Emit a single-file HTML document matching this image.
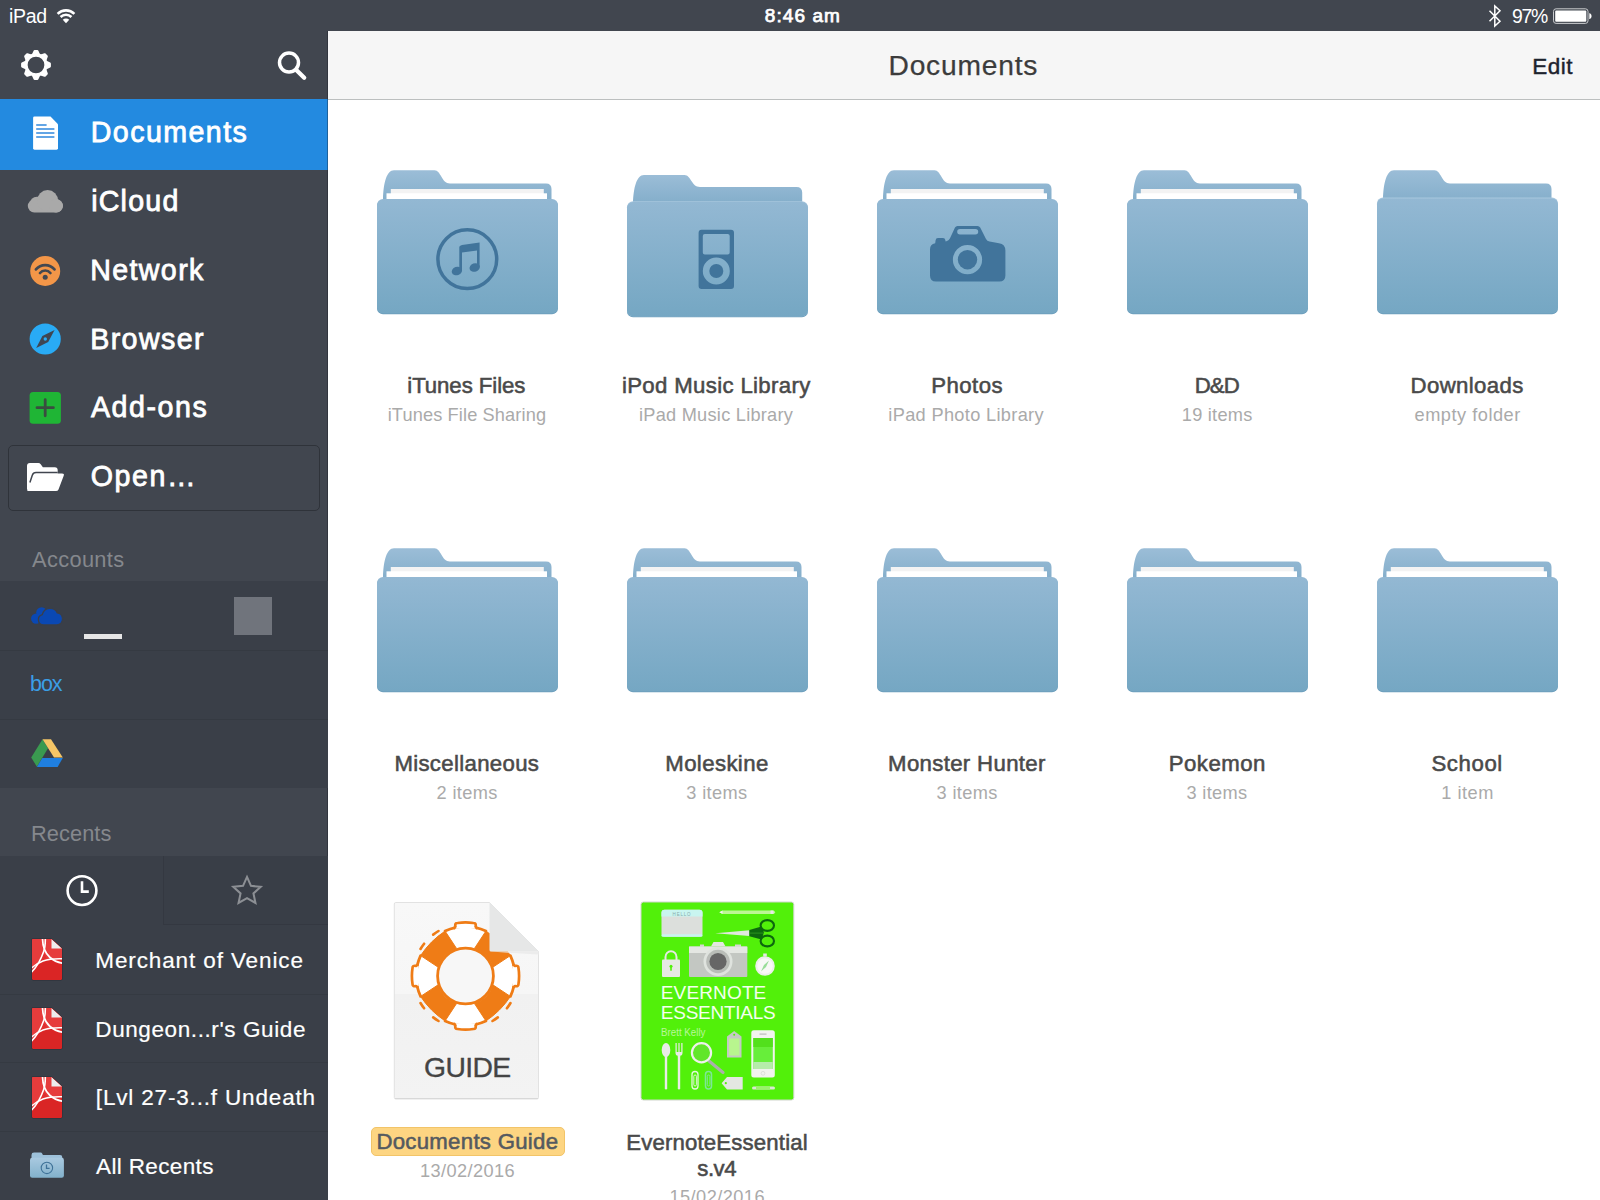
<!DOCTYPE html>
<html lang="en">
<head>
<meta charset="utf-8">
<title>Documents</title>
<style>
*{box-sizing:border-box;margin:0;padding:0}
html,body{width:1600px;height:1200px;overflow:hidden;background:#fff}
body{font-family:"Liberation Sans",sans-serif;position:relative;color:#444}
.abs{position:absolute}
.t{position:absolute;white-space:nowrap;line-height:1}
#status{left:0;top:0;width:1600px;height:31px;background:#41464f}
#side{left:0;top:31px;width:328px;height:1169px;background:#41464f}
#head{left:328px;top:31px;width:1272px;height:69px;background:#f6f6f6;border-bottom:1px solid #bcbfbf}
#sel{left:0;top:99px;width:328px;height:70.500px;background:#238ae0}
#openbox{left:8px;top:445px;width:312px;height:66px;border:1px solid #2f333a;border-radius:5px}
#acc{left:0;top:581px;width:328px;height:206.500px;background:#3a3f48}
#rec{left:0;top:856px;width:328px;height:344px;background:#3a3f48}
.sep{position:absolute;left:0;width:328px;height:1px;background:#353a42}
</style>
</head>
<body>
<svg width="0" height="0" style="position:absolute">
<defs>
<linearGradient id="gf" x1="0" y1="0" x2="0" y2="1"><stop offset="0" stop-color="#93b8d3"/><stop offset="1" stop-color="#75a7c3"/></linearGradient>
<linearGradient id="gb" x1="0" y1="0" x2="0" y2="1"><stop offset="0" stop-color="#9bbdd7"/><stop offset="1" stop-color="#7fabc8"/></linearGradient>
<symbol id="folder" viewBox="0 0 184 150">
  <path d="M8 40 L8 30 C8.500 14 11.500 1.200 19 1.200 L59.500 1.200 C66 1.200 66.500 14.400 75 14.400 L171 14.400 Q176.500 14.400 176.500 20 L176.500 40 Z" fill="url(#gb)"/>
  <rect x="15.800" y="20" width="153" height="12" fill="#f3f3f3"/>
  <rect x="11.500" y="24.300" width="160.500" height="10" fill="#fff"/>
  <rect x="2" y="31" width="181" height="114.300" rx="6" fill="#6d9fbd"/>
  <rect x="2" y="30" width="181" height="114.300" rx="6" fill="url(#gf)"/>
</symbol>
<symbol id="folderE" viewBox="0 0 184 150">
  <path d="M8 40 L8 34 C8.500 19 11.500 5.900 19 5.900 L59.500 5.900 C66 5.900 66.500 17.900 75 17.900 L171.500 17.900 Q177.200 17.900 177.200 23.500 L177.200 40 Z" fill="url(#gb)"/>
  <rect x="2" y="33.900" width="181" height="114.300" rx="6" fill="#6d9fbd"/>
  <rect x="2" y="32.200" width="181" height="115" rx="6" fill="#a8c7de"/>
  <rect x="2" y="33" width="181" height="114.300" rx="6" fill="url(#gf)"/>
</symbol>
<symbol id="folderD" viewBox="0 0 184 150">
  <path d="M8 40 L8 30 C8.500 14 11.500 1.200 19 1.200 L59.500 1.200 C66 1.200 66.500 14.400 75 14.400 L171 14.400 Q176.500 14.400 176.500 20 L176.500 40 Z" fill="url(#gb)"/>
  <rect x="2" y="31" width="181" height="114.300" rx="6" fill="#6d9fbd"/>
  <rect x="2" y="28.600" width="181" height="115" rx="6" fill="#a8c7de"/>
  <rect x="2" y="29.400" width="181" height="114.900" rx="6" fill="url(#gf)"/>
</symbol>
</defs>
</svg>
<div id="status" class="abs"></div>
<div id="side" class="abs"></div>
<div id="head" class="abs"></div>
<div id="sel" class="abs"></div>
<div id="edge" class="abs" style="left:327px;top:31px;width:1px;height:1169px;background:rgba(20,24,32,.35)"></div>
<div id="openbox" class="abs"></div>
<div id="acc" class="abs"></div>
<div class="sep" style="top:650px"></div>
<div class="sep" style="top:719px"></div>
<div class="abs" style="left:84px;top:634px;width:38px;height:5px;background:#e6e6e6"></div>
<div class="abs" style="left:234px;top:597px;width:38px;height:38px;background:#70747c"></div>
<div id="rec" class="abs"></div>
<div class="abs" style="left:163px;top:856px;width:165px;height:69px;border-left:1px solid #343841;border-bottom:1px solid #343841;background:#393e47"></div>
<div class="sep" style="top:994px"></div>
<div class="sep" style="top:1062px"></div>
<div class="sep" style="top:1131px"></div>
<div class="abs" style="left:370.500px;top:1126.500px;width:194.500px;height:29px;background:#fdd582;border:1px solid #f2c468;border-radius:5px"></div>
<div class="t" style="left:9.00px;top:7.00px;font-size:19.5px;color:#fff;letter-spacing:-0.311px">iPad</div>
<div class="t" style="left:764.77px;top:6.00px;font-size:19px;color:#fff;letter-spacing:1.071px;-webkit-text-stroke:0.75px #fff">8:46 am</div>
<div class="t" style="left:1512.00px;top:7.00px;font-size:19.4px;color:#fff;letter-spacing:-1.284px">97%</div>
<div class="t" style="left:888.52px;top:51.00px;font-size:28.2px;color:#3c3c3c;letter-spacing:0.785px;-webkit-text-stroke:0.25px #3c3c3c">Documents</div>
<div class="t" style="left:1532.20px;top:56.00px;font-size:22.5px;color:#1d232e;letter-spacing:0.527px;-webkit-text-stroke:0.4px #1d232e">Edit</div>
<div class="t" style="left:90.70px;top:118.00px;font-size:28.6px;color:#fff;letter-spacing:1.448px;-webkit-text-stroke:0.8px #fff">Documents</div>
<div class="t" style="left:91.15px;top:187.00px;font-size:28.6px;color:#fff;letter-spacing:1.218px;-webkit-text-stroke:0.8px #fff">iCloud</div>
<div class="t" style="left:90.15px;top:256.00px;font-size:28.6px;color:#fff;letter-spacing:1.397px;-webkit-text-stroke:0.8px #fff">Network</div>
<div class="t" style="left:90.15px;top:325.00px;font-size:28.6px;color:#fff;letter-spacing:1.434px;-webkit-text-stroke:0.8px #fff">Browser</div>
<div class="t" style="left:90.90px;top:393.00px;font-size:28.6px;color:#fff;letter-spacing:1.583px;-webkit-text-stroke:0.8px #fff">Add-ons</div>
<div class="t" style="left:90.65px;top:462.00px;font-size:28.6px;color:#fff;letter-spacing:1.625px;-webkit-text-stroke:0.8px #fff">Open…</div>
<div class="t" style="left:32.00px;top:549.00px;font-size:21.8px;color:#85888d;letter-spacing:0.356px">Accounts</div>
<div class="t" style="left:31.00px;top:823.00px;font-size:21.8px;color:#85888d;letter-spacing:0.073px">Recents</div>
<div class="t" style="left:95.30px;top:950.00px;font-size:22.5px;color:#fff;letter-spacing:0.882px;-webkit-text-stroke:0.2px #fff">Merchant of Venice</div>
<div class="t" style="left:95.30px;top:1019.00px;font-size:22.5px;color:#fff;letter-spacing:0.594px;-webkit-text-stroke:0.2px #fff">Dungeon...r's Guide</div>
<div class="t" style="left:95.80px;top:1087.00px;font-size:22.5px;color:#fff;letter-spacing:0.835px;-webkit-text-stroke:0.2px #fff">[Lvl 27-3...f Undeath</div>
<div class="t" style="left:96.10px;top:1156.00px;font-size:22.5px;color:#fff;letter-spacing:0.355px;-webkit-text-stroke:0.2px #fff">All Recents</div>
<div class="t" style="left:30.00px;top:674.00px;font-size:21.5px;color:#3a9ee6;letter-spacing:-1.057px">box</div>
<div class="t" style="left:407.27px;top:375.00px;font-size:22.2px;color:#4a4a4a;letter-spacing:-0.058px;-webkit-text-stroke:0.55px #4a4a4a">iTunes Files</div>
<div class="t" style="left:621.88px;top:375.00px;font-size:22.2px;color:#4a4a4a;letter-spacing:0.350px;-webkit-text-stroke:0.55px #4a4a4a">iPod Music Library</div>
<div class="t" style="left:931.27px;top:375.00px;font-size:22.2px;color:#4a4a4a;letter-spacing:0.434px;-webkit-text-stroke:0.55px #4a4a4a">Photos</div>
<div class="t" style="left:1194.78px;top:375.00px;font-size:22.2px;color:#4a4a4a;letter-spacing:-0.936px;-webkit-text-stroke:0.55px #4a4a4a">D&amp;D</div>
<div class="t" style="left:1410.58px;top:375.00px;font-size:22.2px;color:#4a4a4a;letter-spacing:0.360px;-webkit-text-stroke:0.55px #4a4a4a">Downloads</div>
<div class="t" style="left:394.38px;top:753.00px;font-size:22.2px;color:#4a4a4a;letter-spacing:0.330px;-webkit-text-stroke:0.55px #4a4a4a">Miscellaneous</div>
<div class="t" style="left:665.27px;top:753.00px;font-size:22.2px;color:#4a4a4a;letter-spacing:0.388px;-webkit-text-stroke:0.55px #4a4a4a">Moleskine</div>
<div class="t" style="left:888.07px;top:753.00px;font-size:22.2px;color:#4a4a4a;letter-spacing:0.341px;-webkit-text-stroke:0.55px #4a4a4a">Monster Hunter</div>
<div class="t" style="left:1168.68px;top:753.00px;font-size:22.2px;color:#4a4a4a;letter-spacing:0.509px;-webkit-text-stroke:0.55px #4a4a4a">Pokemon</div>
<div class="t" style="left:1431.48px;top:753.00px;font-size:22.2px;color:#4a4a4a;letter-spacing:0.588px;-webkit-text-stroke:0.55px #4a4a4a">School</div>
<div class="t" style="left:376.38px;top:1131.00px;font-size:22.2px;color:#555a60;letter-spacing:0.293px;-webkit-text-stroke:0.55px #555a60">Documents Guide</div>
<div class="t" style="left:626.27px;top:1132.00px;font-size:22.2px;color:#4a4a4a;letter-spacing:0.159px;-webkit-text-stroke:0.55px #4a4a4a">EvernoteEssential</div>
<div class="t" style="left:697.27px;top:1158.00px;font-size:22.2px;color:#4a4a4a;letter-spacing:-0.467px;-webkit-text-stroke:0.55px #4a4a4a">s.v4</div>
<div class="t" style="left:387.70px;top:406.00px;font-size:18.2px;color:#aaaaaa;letter-spacing:0.133px">iTunes File Sharing</div>
<div class="t" style="left:639.00px;top:406.00px;font-size:18.2px;color:#aaaaaa;letter-spacing:0.253px">iPad Music Library</div>
<div class="t" style="left:888.30px;top:406.00px;font-size:18.2px;color:#aaaaaa;letter-spacing:0.333px">iPad Photo Library</div>
<div class="t" style="left:1181.80px;top:406.00px;font-size:18.2px;color:#aaaaaa;letter-spacing:0.251px">19 items</div>
<div class="t" style="left:1414.50px;top:406.00px;font-size:18.2px;color:#aaaaaa;letter-spacing:0.516px">empty folder</div>
<div class="t" style="left:436.50px;top:784.00px;font-size:18.2px;color:#aaaaaa;letter-spacing:0.379px">2 items</div>
<div class="t" style="left:686.30px;top:784.00px;font-size:18.2px;color:#aaaaaa;letter-spacing:0.362px">3 items</div>
<div class="t" style="left:936.50px;top:784.00px;font-size:18.2px;color:#aaaaaa;letter-spacing:0.362px">3 items</div>
<div class="t" style="left:1186.60px;top:784.00px;font-size:18.2px;color:#aaaaaa;letter-spacing:0.295px">3 items</div>
<div class="t" style="left:1441.20px;top:784.00px;font-size:18.2px;color:#aaaaaa;letter-spacing:0.525px">1 item</div>
<div class="t" style="left:419.90px;top:1162.00px;font-size:18.2px;color:#aaaaaa;letter-spacing:0.410px">13/02/2016</div>
<div class="t" style="left:669.50px;top:1188.00px;font-size:18.2px;color:#aaaaaa;letter-spacing:0.443px">15/02/2016</div>
<!-- GRID FOLDERS -->
<svg class="abs" style="left:375px;top:169px" width="184" height="150"><use href="#folder"/></svg>
<svg class="abs" style="left:625px;top:169px" width="184" height="150"><use href="#folderE"/></svg>
<svg class="abs" style="left:875px;top:169px" width="184" height="150"><use href="#folder"/></svg>
<svg class="abs" style="left:1125px;top:169px" width="184" height="150"><use href="#folder"/></svg>
<svg class="abs" style="left:1375px;top:169px" width="184" height="150"><use href="#folderD"/></svg>
<svg class="abs" style="left:375px;top:547px" width="184" height="150"><use href="#folder"/></svg>
<svg class="abs" style="left:625px;top:547px" width="184" height="150"><use href="#folder"/></svg>
<svg class="abs" style="left:875px;top:547px" width="184" height="150"><use href="#folder"/></svg>
<svg class="abs" style="left:1125px;top:547px" width="184" height="150"><use href="#folder"/></svg>
<svg class="abs" style="left:1375px;top:547px" width="184" height="150"><use href="#folder"/></svg>
<!-- STATUS ICONS -->
<svg class="abs" style="left:50px;top:0" width="40" height="31" viewBox="50 0 40 31">
  <g transform="translate(66 23) scale(.955) translate(-66 -23)">
  <g fill="none" stroke="#fff" stroke-width="2.700">
    <path d="M57.200 13.400 A12.600 12.600 0 0 1 74.800 13.400"/>
    <path d="M60.300 16.700 A8.100 8.100 0 0 1 71.700 16.700"/>
  </g>
  <path d="M66 23.200 L62.600 19.600 A4.800 4.800 0 0 1 69.400 19.600 Z" fill="#fff"/>
  </g>
</svg>
<svg class="abs" style="left:1480px;top:0" width="120" height="31" viewBox="1480 0 120 31">
  <path d="M1489.500 10.700 L1500 21.200 L1494.800 26 L1494.800 6 L1500 10.800 L1489.500 21.300" fill="none" stroke="#fff" stroke-width="1.500" stroke-linejoin="miter"/>
  <rect x="1553.500" y="8.800" width="34.500" height="14.600" rx="2.600" fill="none" stroke="#c9cbce" stroke-width="1"/>
  <rect x="1555.200" y="10.500" width="31.100" height="11.200" rx="1" fill="#fff"/>
  <path d="M1589.300 13.300 L1590 13.300 Q1591.600 14.200 1591.600 16.100 Q1591.600 18 1590 18.900 L1589.300 18.900 Z" fill="#fff"/>
</svg>

<!-- TOOLBAR ICONS -->
<svg class="abs" style="left:15.800px;top:45.300px" width="40" height="40" viewBox="-20.800 -20.800 41.600 41.600">
  <g fill="#fff">
    <path fill-rule="evenodd" d="M0 -12.100 A12.100 12.100 0 1 1 0 12.100 A12.100 12.100 0 1 1 0 -12.100 Z M0 -8.700 A8.700 8.700 0 1 0 0 8.700 A8.700 8.700 0 1 0 0 -8.700 Z"/>
    <g id="tooth"><path d="M-4.300 -11 L-2.500 -14.800 Q-2.200 -15.500 -1.400 -15.500 L1.400 -15.500 Q2.200 -15.500 2.500 -14.800 L4.300 -11 Z"/></g>
    <use href="#tooth" transform="rotate(45)"/><use href="#tooth" transform="rotate(90)"/><use href="#tooth" transform="rotate(135)"/>
    <use href="#tooth" transform="rotate(180)"/><use href="#tooth" transform="rotate(225)"/><use href="#tooth" transform="rotate(270)"/><use href="#tooth" transform="rotate(315)"/>
  </g>
</svg>
<svg class="abs" style="left:270px;top:45px" width="45" height="45" viewBox="270 45 45 45">
  <circle cx="289" cy="62.600" r="9.500" fill="none" stroke="#fff" stroke-width="3.500"/>
  <path d="M296.300 69.900 L304.200 77.800" stroke="#fff" stroke-width="4.300" stroke-linecap="round"/>
</svg>

<!-- NAV ICONS -->
<svg class="abs" style="left:20px;top:105px" width="60" height="60" viewBox="20 105 60 60">
  <path d="M34.500 116.600 L50.500 116.600 L58 124.300 L58 148.300 Q58 149.700 56.600 149.700 L34.500 149.700 Q33.100 149.700 33.100 148.300 L33.100 118 Q33.100 116.600 34.500 116.600 Z" fill="#fff"/>
  <g stroke="#3088dd" stroke-width="1.600">
    <path d="M36.200 125h10.400M36.200 129h18.200M36.200 133h18.200M36.200 137h18.200"/>
  </g>
</svg>
<svg class="abs" style="left:20px;top:180px" width="60" height="45" viewBox="20 180 60 45">
  <g fill="#a9a9a9">
    <rect x="27.800" y="199.500" width="35.200" height="13" rx="6.500"/>
    <circle cx="37" cy="204" r="7.300"/>
    <circle cx="47.600" cy="200.600" r="10.500"/>
    <circle cx="56" cy="205.800" r="6.800"/>
  </g>
</svg>
<svg class="abs" style="left:25px;top:250px" width="40" height="40" viewBox="25 250 40 40">
  <circle cx="45.200" cy="271" r="15" fill="#f39648"/>
  <circle cx="45.200" cy="277.300" r="2.500" fill="#434851"/>
  <g fill="none" stroke="#434851" stroke-width="2.700" stroke-linecap="round">
    <path d="M40 273 A6.700 6.700 0 0 1 50.400 273"/>
    <path d="M35.900 269.400 A12.200 12.200 0 0 1 54.500 269.400"/>
  </g>
</svg>
<svg class="abs" style="left:25px;top:320px" width="40" height="40" viewBox="25 320 40 40">
  <circle cx="45.200" cy="339" r="15.600" fill="#29abf5"/>
  <path d="M54.600 330.100 L48.200 342 L36.200 348 L42.400 336.100 Z" fill="#3f4652"/>
  <circle cx="45.300" cy="339" r="1.700" fill="#29abf5"/>
</svg>
<svg class="abs" style="left:25px;top:388px" width="40" height="40" viewBox="25 388 40 40">
  <rect x="29.600" y="392" width="31.300" height="31.800" rx="3.500" fill="#1fb535"/>
  <path d="M45.200 399.600v16.200M37 407.700h16.400" stroke="#3a4d40" stroke-width="2.800" stroke-linecap="round"/>
</svg>
<svg class="abs" style="left:20px;top:455px" width="55" height="45" viewBox="20 455 55 45">
  <path d="M27 489 L27 465.800 Q27 462.900 29.900 462.900 L38.300 462.900 Q39.800 462.900 40.700 464.200 L42.900 467.300 L54.800 467.300 Q57.700 467.300 57.700 470.200 L57.700 489 Z" fill="#fff"/>
  <path d="M34.600 473.400 L62 473.400 Q64.600 473.400 63.700 475.800 L58.500 489.400 Q57.800 491 56 491 L28.700 491 Q26.600 491 27.300 489 L32 475.300 Q32.700 473.400 34.600 473.400 Z" fill="#fff"/>
  <path d="M29.900 482.500 L32.300 475.300 Q33.200 472.500 36 472.500 L57.700 472.500" fill="none" stroke="#41464f" stroke-width="1.500"/>
</svg>
<!-- ACCOUNT LOGOS -->
<svg class="abs" style="left:25px;top:600px" width="45" height="30" viewBox="25 600 45 30">
  <g fill="#0a48b3">
    <circle cx="36.200" cy="618.600" r="5.200"/>
    <circle cx="41.600" cy="612.600" r="5.400"/>
    <rect x="36" y="614" width="10" height="9"/>
  </g>
  <g fill="#0a48b3" stroke="#3a3f48" stroke-width="1.300">
    <path d="M43.500 625 A5.300 5.300 0 0 1 42.300 614.600 A8 8 0 0 1 57.300 612.900 A6.100 6.100 0 0 1 57 625 Z"/>
  </g>
</svg>
<svg class="abs" style="left:25px;top:735px" width="45" height="36" viewBox="25 735 45 36">
  <path d="M42.500 739.200 L31.200 757.400 L36.900 766.800 L48 748.200 Z" fill="#3a9a50"/>
  <path d="M42.500 739.200 L51 739.200 L62.800 757.600 L54 757.600 Z" fill="#f6c666"/>
  <path d="M42.300 757.900 L62.800 757.900 L57.600 767 L36.900 767 Z" fill="#1f7fe0"/>
</svg>

<!-- RECENTS TABS -->
<svg class="abs" style="left:60px;top:870px" width="44" height="42" viewBox="60 870 44 42">
  <circle cx="82" cy="890.600" r="14.400" fill="none" stroke="#fff" stroke-width="2.600"/>
  <path d="M82 881.300 L82 891.600 L88.800 891.600" fill="none" stroke="#fff" stroke-width="2.600" stroke-linejoin="miter"/>
</svg>
<svg class="abs" style="left:225.500px;top:870px" width="42" height="42" viewBox="-22.800 -22.800 45.600 45.600">
  <path d="M0 -15.300 L4.300 -5.600 L14.900 -4.500 L7 2.600 L9.200 13 L0 7.700 L-9.200 13 L-7 2.600 L-14.900 -4.500 L-4.300 -5.600 Z" fill="none" stroke="#8c8f94" stroke-width="2.200" stroke-linejoin="miter"/>
</svg>

<!-- PDF ICONS -->
<svg width="0" height="0" style="position:absolute"><defs>
<linearGradient id="gp" x1="0" y1="0" x2="0" y2="1"><stop offset="0" stop-color="#e84141"/><stop offset=".5" stop-color="#e03333"/><stop offset=".55" stop-color="#da2626"/><stop offset="1" stop-color="#d92323"/></linearGradient>
<symbol id="pdf" viewBox="0 0 32 43">
  <clipPath id="pdfc"><path d="M2 1 L20.500 1 L31 10.600 L31 40.500 Q31 42 29.500 42 L2.500 42 Q1 42 1 40.500 L1 2 Q1 1 2 1 Z"/></clipPath>
  <path d="M1.800 0.500 L20.700 0.500 L31.500 10.400 L31.500 40.700 Q31.500 42.500 29.700 42.500 L2.300 42.500 Q0.500 42.500 0.500 40.700 L0.500 1.800 Q0.500 0.500 1.800 0.500 Z" fill="#2b2f36"/>
  <g clip-path="url(#pdfc)">
    <rect x="0" y="0" width="32" height="43" fill="#da2525"/>
    <path d="M0 0 L32 0 L32 20.800 C25 20.500 18 21 12 23 C8 24.500 4 27 0 30.500 Z" fill="#e63c3c"/>
    <path d="M12.500 14 C10 21 6 29 1 33.800 L1 29.500 C4 27 8 24.500 12 23 C13.500 22.400 15 22 16.500 21.700 Z" fill="#e03030"/>
    <path d="M20.500 1 L31 10.600 L20.500 10.600 Z" fill="#ededed"/>
    <g fill="none" stroke="#fff" stroke-linecap="butt">
      <path d="M11.500 0 C11.500 9 14 15 19 19.500 C23 23 27 24.500 32 25.200" stroke-width="1.700"/>
      <path d="M14.300 0 C14.500 8 13.500 11.500 12.500 14 C10 21 6 29 0 34.500" stroke-width="1.600"/>
      <path d="M0 30.500 C4 27 8 24.500 12 23 C18 21 25 20.500 32 20.800" stroke-width="1.400"/>
    </g>
  </g>
</symbol>
</defs></svg>
<svg class="abs" style="left:31px;top:938px" width="32" height="43"><use href="#pdf"/></svg>
<svg class="abs" style="left:31px;top:1007px" width="32" height="43"><use href="#pdf"/></svg>
<svg class="abs" style="left:31px;top:1076px" width="32" height="43"><use href="#pdf"/></svg>

<!-- ALL RECENTS FOLDER -->
<svg class="abs" style="left:28px;top:1150px" width="38" height="30" viewBox="28 1150 38 30">
  <defs><linearGradient id="gs1" x1="0" y1="0" x2="0" y2="1"><stop offset="0" stop-color="#a9c9e0"/><stop offset="1" stop-color="#82b1cb"/></linearGradient></defs>
  <path d="M31.500 1160 L31.500 1155 Q31.500 1152.600 34 1152.600 L40.500 1152.600 Q41.800 1152.600 42.300 1153.800 L42.900 1155 L60 1155 Q62.300 1155 62.300 1157.300 L62.300 1160 Z" fill="#9dc1da"/>
  <rect x="30" y="1157.800" width="33.900" height="20" rx="2.200" fill="url(#gs1)"/>
  <circle cx="46.900" cy="1167.900" r="5.700" fill="none" stroke="#3f7298" stroke-width="1.100"/>
  <path d="M46.500 1164.600 L46.500 1168.400 L49.600 1168.400" fill="none" stroke="#3f7298" stroke-width="1.300"/>
</svg>

<!-- FOLDER OVERLAY ICONS -->
<svg class="abs" style="left:430px;top:222px" width="76" height="76" viewBox="430 222 76 76">
  <circle cx="467.300" cy="259.200" r="29.400" fill="none" stroke="#41749b" stroke-width="3.500"/>
  <g fill="#41749b">
    <ellipse cx="456.900" cy="271" rx="5.300" ry="4.200" transform="rotate(-20 456.900 271)"/>
    <ellipse cx="474.700" cy="267.500" rx="5.300" ry="4.200" transform="rotate(-20 474.700 267.500)"/>
    <path d="M459.300 246.800 Q460 245.300 462 244.900 L479.600 242.400 L479.600 267 L477 267 L477 250.500 L462 252.600 L462 270.500 L459.300 270.500 Z"/>
  </g>
</svg>
<svg class="abs" style="left:690px;top:222px" width="54" height="76" viewBox="690 222 54 76">
  <path fill-rule="evenodd" fill="#41749b" d="M701.600 229.700 L731 229.700 Q734 229.700 734 232.700 L734 286 Q734 289 731 289 L701.600 289 Q698.600 289 698.600 286 L698.600 232.700 Q698.600 229.700 701.600 229.700 Z M704.800 234 Q702.800 234 702.800 236 L702.800 252.600 Q702.800 254.600 704.800 254.600 L727.700 254.600 Q729.700 254.600 729.700 252.600 L729.700 236 Q729.700 234 727.700 234 Z M716.300 257.500 A13.500 13.500 0 1 0 716.300 284.500 A13.500 13.500 0 1 0 716.300 257.500 Z"/>
  <circle cx="716.300" cy="271" r="7" fill="#41749b"/>
</svg>
<svg class="abs" style="left:920px;top:220px" width="96" height="70" viewBox="920 220 96 70">
  <path fill-rule="evenodd" fill="#41749b" d="M957.500 226 L977.500 226 Q979.300 226 980.200 227.600 L986 239 Q987 241 989.500 241.500 L999 243.200 Q1005.400 244.300 1005.400 250.500 L1005.400 275.500 Q1005.400 281.600 999.300 281.600 L936 281.600 Q930 281.600 930 275.500 L930 249.500 Q930 244.300 935.200 243.300 L935.600 240.300 Q935.800 238 938 238 L943 238 Q945 238 945.300 240 L945.600 241.500 L947 241 Q949 240.300 950 238.300 L955 227.600 Q955.800 226 957.500 226 Z M960 229 Q957.200 229 957.200 231.700 Q957.200 234.400 960 234.400 L975.400 234.400 Q978.200 234.400 978.200 231.700 Q978.200 229 975.400 229 Z M967.500 245.100 A14.600 14.600 0 1 0 967.500 274.300 A14.600 14.600 0 1 0 967.500 245.100 Z"/>
  <circle cx="967.500" cy="259.700" r="9.700" fill="#41749b"/>
</svg>

<!-- GUIDE DOC -->
<svg class="abs" style="left:390px;top:898px" width="154" height="206" viewBox="390 898 154 206">
  <defs><linearGradient id="gd" x1="0" y1="0" x2="0" y2="1"><stop offset="0" stop-color="#f8f8f8"/><stop offset=".467" stop-color="#f6f6f6"/><stop offset=".468" stop-color="#f1f1f1"/><stop offset="1" stop-color="#f3f3f3"/></linearGradient></defs>
  <path d="M395.800 902.500 L489.500 902.500 L538.500 951.500 L538.500 1097.500 Q538.500 1099 537 1099 L395.800 1099 Q394.300 1099 394.300 1097.500 L394.300 904 Q394.300 902.500 395.800 902.500 Z" fill="url(#gd)" stroke="#e2e2e2" stroke-width="1"/>
  <path d="M395 1098.500 L538 1098.500" stroke="#d8d8d8" stroke-width="1.200"/>
  <path d="M445.1 931.1 A49.3 49.3 0 0 1 485.9 931.1 L474.5 948.4 A29.0 29.0 0 0 0 456.5 948.4 Z M510.4 955.6 A49.3 49.3 0 0 1 510.4 996.4 L493.1 985.0 A29.0 29.0 0 0 0 493.1 967.0 Z M485.9 1020.9 A49.3 49.3 0 0 1 445.1 1020.9 L456.5 1003.6 A29.0 29.0 0 0 0 474.5 1003.6 Z M420.6 996.4 A49.3 49.3 0 0 1 420.6 955.6 L437.9 967.0 A29.0 29.0 0 0 0 437.9 985.0 Z" fill="#fff"/>
  <path d="M445.1 931.1 A49.3 49.3 0 0 1 485.9 931.1 M510.4 955.6 A49.3 49.3 0 0 1 510.4 996.4 M485.9 1020.9 A49.3 49.3 0 0 1 445.1 1020.9 M420.6 996.4 A49.3 49.3 0 0 1 420.6 955.6" fill="none" stroke="#ef7c16" stroke-width="2.800" stroke-linecap="round"/>
  <path d="M485.9 931.1 A83.8 83.8 0 0 1 510.4 955.6 L493.1 967.0 A29.0 29.0 0 0 0 474.5 948.4 Z M510.4 996.4 A83.8 83.8 0 0 1 485.9 1020.9 L474.5 1003.6 A29.0 29.0 0 0 0 493.1 985.0 Z M445.1 1020.9 A83.8 83.8 0 0 1 420.6 996.4 L437.9 985.0 A29.0 29.0 0 0 0 456.5 1003.6 Z M420.6 955.6 A83.8 83.8 0 0 1 445.1 931.1 L456.5 948.4 A29.0 29.0 0 0 0 437.9 967.0 Z" fill="#ef7c16" stroke="#ef7c16" stroke-width="1" stroke-linejoin="round"/>
  <circle cx="465.5" cy="976.0" r="27.9" fill="#f7f7f7" stroke="#ef7c16" stroke-width="2.800"/>
  <path d="M455.0 928.8 L455.4 926.5 L457.6 923.0 A53.599999999999994 53.599999999999994 0 0 1 473.4 923.0 L475.6 926.5 L476.0 928.8 Z M512.7 965.5 L515.0 965.9 L518.5 968.1 A53.599999999999994 53.599999999999994 0 0 1 518.5 983.9 L515.0 986.1 L512.7 986.5 Z M476.0 1023.2 L475.6 1025.5 L473.4 1029.0 A53.599999999999994 53.599999999999994 0 0 1 457.6 1029.0 L455.4 1025.5 L455.0 1023.2 Z M418.3 986.5 L416.0 986.1 L412.5 983.9 A53.599999999999994 53.599999999999994 0 0 1 412.5 968.1 L416.0 965.9 L418.3 965.5 Z" fill="#fff"/>
  <path d="M454.4 928.0 L455.4 926.5 Q454.7 922.9 457.6 923.0 A53.599999999999994 53.599999999999994 0 0 1 473.4 923.0 Q476.3 922.9 475.6 926.5 L476.6 928.0 M513.5 964.9 L515.0 965.9 Q518.6 965.2 518.5 968.1 A53.599999999999994 53.599999999999994 0 0 1 518.5 983.9 Q518.6 986.8 515.0 986.1 L513.5 987.1 M476.6 1024.0 L475.6 1025.5 Q476.3 1029.1 473.4 1029.0 A53.599999999999994 53.599999999999994 0 0 1 457.6 1029.0 Q454.7 1029.1 455.4 1025.5 L454.4 1024.0 M417.5 987.1 L416.0 986.1 Q412.4 986.8 412.5 983.9 A53.599999999999994 53.599999999999994 0 0 1 412.5 968.1 Q412.4 965.2 416.0 965.9 L417.5 964.9" fill="none" stroke="#ef7c16" stroke-width="2.700" stroke-linecap="round" stroke-linejoin="round"/>
  <path d="M492.5 931.0 A52.5 52.5 0 0 1 497.8 934.6 M506.9 943.7 A52.5 52.5 0 0 1 510.5 949.0 M510.5 1003.0 A52.5 52.5 0 0 1 506.9 1008.3 M497.8 1017.4 A52.5 52.5 0 0 1 492.5 1021.0 M438.5 1021.0 A52.5 52.5 0 0 1 433.2 1017.4 M424.1 1008.3 A52.5 52.5 0 0 1 420.5 1003.0 M420.5 949.0 A52.5 52.5 0 0 1 424.1 943.7 M433.2 934.6 A52.5 52.5 0 0 1 438.5 931.0" fill="none" stroke="#ef7c16" stroke-width="2.600" stroke-linecap="round"/>
  <path d="M489.500 902.500 L538.500 951.500 L491 951.500 Q489.500 951.500 489.500 950 Z" fill="#e6e7e7"/>
  <path d="M489.500 951.500 L538.500 951.500 L538.500 954.500 Z" fill="#ececec"/>
  <text x="467.300" y="1077.200" text-anchor="middle" font-family="Liberation Sans, sans-serif" font-size="28.300" letter-spacing="-.6" fill="#444" stroke="#444" stroke-width=".35">GUIDE</text>
</svg>
<!-- EVERNOTE COVER -->
<svg class="abs" style="left:638px;top:898px" width="160" height="206" viewBox="638 898 160 206" font-family="Liberation Sans, sans-serif">
  <rect x="641" y="902" width="152.800" height="198" rx="2.500" fill="#52f00a" stroke="#cfd6cc" stroke-width="1"/>
  <!-- hello badge -->
  <rect x="661.500" y="909.800" width="41" height="27" rx="3" fill="#dcdfdc"/>
  <path d="M661.500 916.500 L661.500 912.800 Q661.500 909.800 664.500 909.800 L699.500 909.800 Q702.500 909.800 702.500 912.800 L702.500 916.500 Z" fill="#c9f5f0"/>
  <rect x="661.500" y="934.300" width="41" height="2.500" rx="1.200" fill="#c9f5f0"/>
  <text x="682" y="915.600" font-size="4.500" text-anchor="middle" fill="#8aa" letter-spacing=".8">HELLO</text>
  <!-- pencil -->
  <path d="M719.400 912.200 L722.500 910.500 L773 910.500 Q775 910.500 775 912.200 Q775 913.900 773 913.900 L722.500 913.900 Z" fill="#bcf694"/>
  <path d="M719.400 912.200 L722.500 910.500 L722.500 913.900 Z" fill="#f0f0f0"/>
  <rect x="770.500" y="910.500" width="3" height="3.400" fill="#e8e8e8"/>
  <!-- scissors -->
  <path d="M715.200 933.300 L749.500 930.200 L749.500 935.900 Z" fill="#e1e8de"/>
  <path d="M749.300 930 L761.500 926.500 L764 932.500 L761.500 939.500 L749.300 936.200 Z" fill="#0d680e"/>
  <ellipse cx="767.300" cy="925.500" rx="6.700" ry="5.400" fill="none" stroke="#0d680e" stroke-width="2.100"/>
  <ellipse cx="767.300" cy="941" rx="6.700" ry="5.400" fill="none" stroke="#0d680e" stroke-width="2.100"/>
  <path d="M749.500 933.100 L764 933.100" stroke="#3fae2a" stroke-width=".6"/>
  <!-- lock -->
  <path d="M665.500 961 L665.500 957 A5.500 5.800 0 0 1 676.500 957 L676.500 961" fill="none" stroke="#e6e9e4" stroke-width="2"/>
  <rect x="662" y="959.500" width="18" height="17.500" rx="1" fill="#e6e9e4"/>
  <circle cx="671" cy="966.300" r="1.500" fill="#52f00a"/><rect x="670.200" y="966.500" width="1.600" height="4.200" fill="#52f00a"/>
  <!-- camera -->
  <path d="M711 946.500 L713.500 942 L723 942 L725.500 946.500 Z" fill="#e4e7e2"/>
  <rect x="700" y="944.500" width="4" height="3" fill="#d5d8d3"/><rect x="735" y="944.500" width="6" height="3" fill="#d5d8d3"/>
  <rect x="689" y="946.500" width="58.300" height="30.500" rx="1" fill="#c3c7c2"/>
  <rect x="689" y="946.500" width="58.300" height="6.500" fill="#e4e7e2"/>
  <circle cx="718" cy="961.500" r="14.500" fill="#dfe3de"/>
  <circle cx="718" cy="961.500" r="11.800" fill="#b9bdb8"/>
  <circle cx="718" cy="961.500" r="8.600" fill="#666"/>
  <!-- compass -->
  <rect x="763.200" y="953.500" width="3.600" height="3" fill="#e6e9e4"/>
  <circle cx="765" cy="966" r="9.800" fill="#eceeea"/>
  <circle cx="765" cy="966" r="7.800" fill="#f8f8f6"/>
  <path d="M769 960.500 L766 967 L761 971.500 L764 965 Z" fill="#9d9"/>
  <!-- titles -->
  <text x="660.800" y="999" font-size="19" fill="#f4fff0" textLength="105.500" lengthAdjust="spacing">EVERNOTE</text>
  <text x="660.800" y="1019.200" font-size="19" fill="#f4fff0" textLength="115" lengthAdjust="spacing">ESSENTIALS</text>
  <text x="661" y="1035.700" font-size="10.500" fill="#b9f79a" textLength="44.500" lengthAdjust="spacingAndGlyphs">Brett Kelly</text>
  <!-- spoon & fork -->
  <ellipse cx="666" cy="1050" rx="4.300" ry="7" fill="#e9ece7"/>
  <rect x="664.800" y="1055" width="2.400" height="34.400" rx="1.200" fill="#e9ece7"/>
  <path d="M675.500 1043 L675.500 1053 Q675.500 1056 679 1056 Q682.500 1056 682.500 1053 L682.500 1043 L681.300 1043 L681.300 1052 L679.600 1052 L679.600 1043 L678.400 1043 L678.400 1052 L676.700 1052 L676.700 1043 Z" fill="#e9ece7"/>
  <rect x="677.800" y="1055" width="2.400" height="34.400" rx="1.200" fill="#e9ece7"/>
  <!-- magnifier -->
  <path d="M709 1061 L723 1072.500" stroke="#aab0aa" stroke-width="3.200" stroke-linecap="round"/>
  <circle cx="701.500" cy="1052.800" r="9.600" fill="#61e62a" stroke="#eef0ec" stroke-width="2.200"/>
  <!-- tag top -->
  <path d="M727 1036.500 L734.200 1031 L741.500 1036.500 L741.500 1057.500 L727 1057.500 Z" fill="#c4c9c3"/>
  <rect x="729" y="1038.500" width="10.500" height="17" fill="#b8f58e"/>
  <circle cx="734.200" cy="1034.800" r="1" fill="#52f00a"/>
  <!-- phone -->
  <rect x="751.300" y="1030.200" width="23.500" height="47.200" rx="2.500" fill="#f1f3ef"/>
  <rect x="753.300" y="1038" width="19.500" height="31" fill="#67ee3a"/>
  <rect x="753.300" y="1038" width="19.500" height="9" fill="#52e01c"/>
  <rect x="753.300" y="1062" width="19.500" height="7" fill="#b5ecaa"/>
  <rect x="759.500" y="1033.500" width="7" height="1.200" fill="#bbb"/>
  <circle cx="763" cy="1073.300" r="1.900" fill="none" stroke="#d4d8d2" stroke-width=".7"/>
  <!-- clips -->
  <rect x="692" y="1071.500" width="6" height="17.500" rx="3" fill="none" stroke="#e4f7dc" stroke-width="1.300"/>
  <rect x="693.800" y="1075" width="2.600" height="11" rx="1.300" fill="none" stroke="#e4f7dc" stroke-width=".9"/>
  <rect x="705.500" y="1071.500" width="6" height="17.500" rx="3" fill="none" stroke="#7de69a" stroke-width="1.500"/>
  <rect x="707.300" y="1075" width="2.600" height="11" rx="1.300" fill="none" stroke="#7de69a" stroke-width="1"/>
  <!-- tag bottom -->
  <path d="M721.600 1083.200 L727 1077 L742.700 1077 L742.700 1089.400 L727 1089.400 Z" fill="#e4e7e2"/>
  <circle cx="725.800" cy="1083.200" r="1.100" fill="#52f00a"/>
  <!-- pen -->
  <rect x="752" y="1086.500" width="23" height="3" rx="1.500" fill="#d9e6d2"/>
  <rect x="756" y="1086.500" width="14" height="3" fill="#9af36a"/>
</svg>
</body></html>
